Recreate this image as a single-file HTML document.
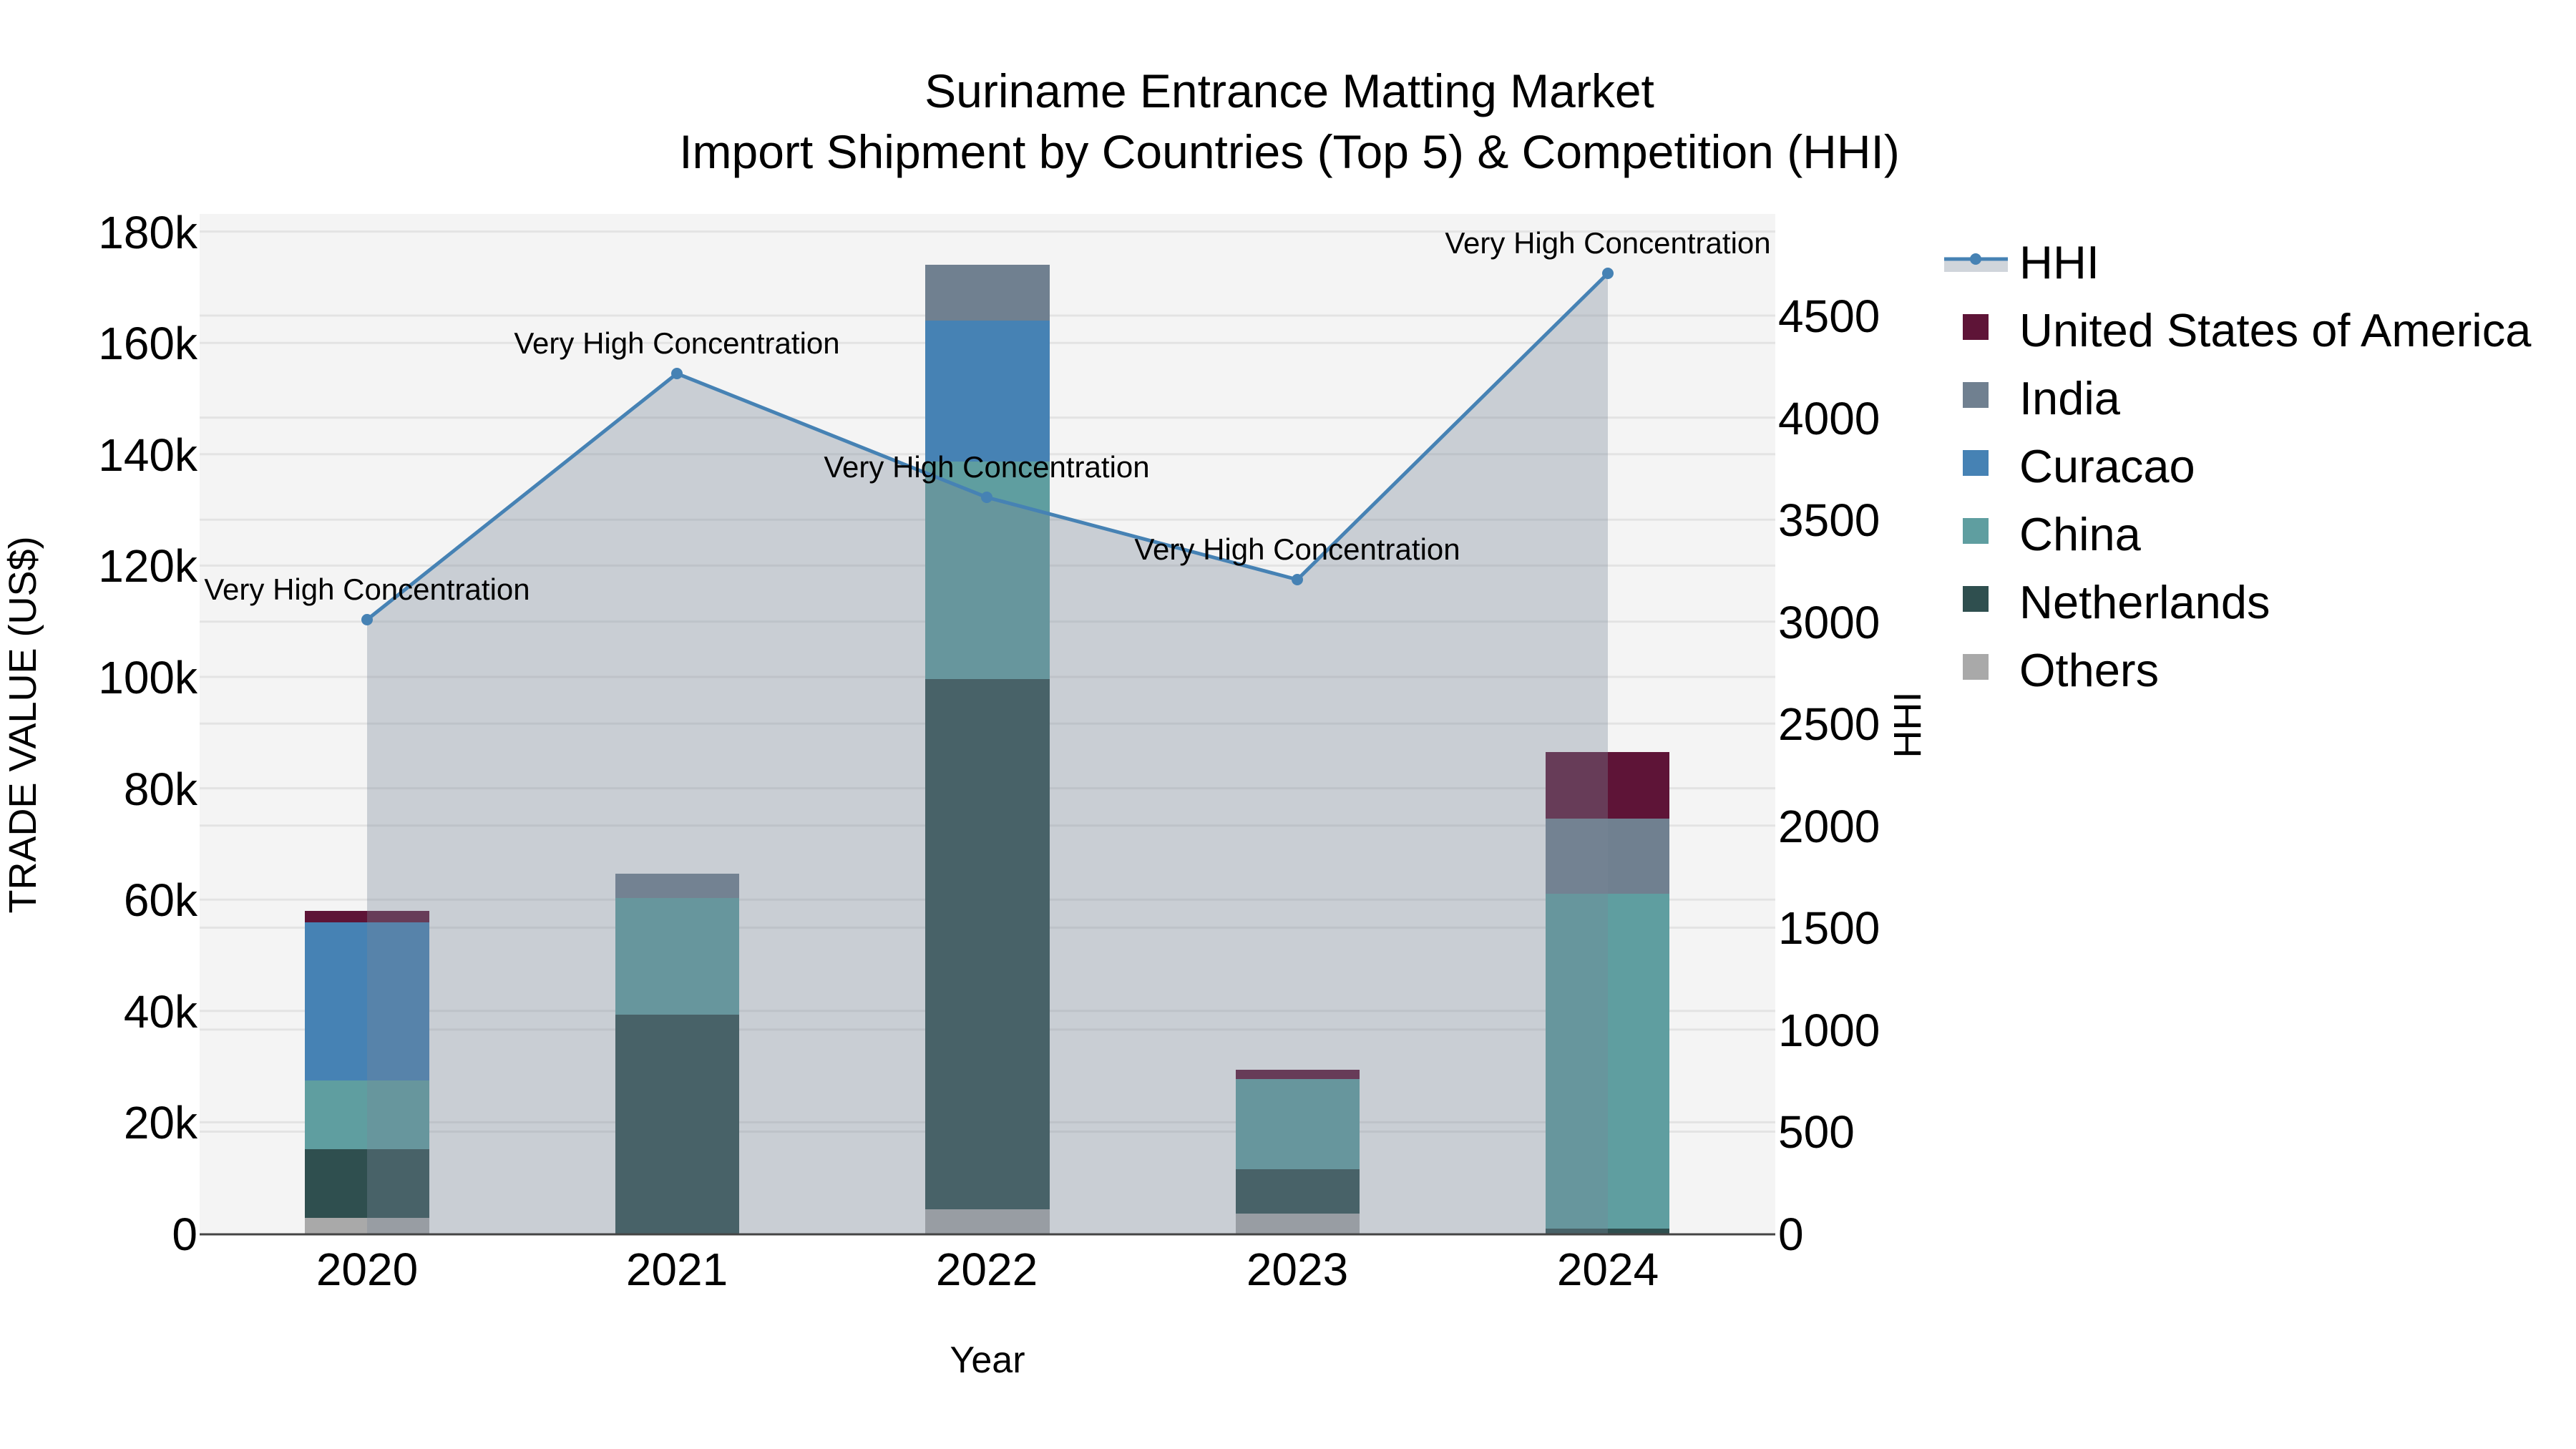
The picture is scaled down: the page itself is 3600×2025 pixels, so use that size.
<!DOCTYPE html>
<html><head><meta charset="utf-8"><style>
html,body{margin:0;padding:0;background:#fff;}
svg{display:block;font-family:"Liberation Sans",sans-serif;}
</style></head><body>
<svg width="3600" height="2025" viewBox="0 0 3600 2025" xmlns="http://www.w3.org/2000/svg">
<rect width="3600" height="2025" fill="#fff"/>
<rect x="279" y="299" width="2202" height="1425" fill="#f4f4f4"/>
<g stroke="#e3e3e3" stroke-width="3">
<line x1="279" x2="2481" y1="1568.4" y2="1568.4"/><line x1="279" x2="2481" y1="1412.8" y2="1412.8"/>
<line x1="279" x2="2481" y1="1257.2" y2="1257.2"/><line x1="279" x2="2481" y1="1101.6" y2="1101.6"/>
<line x1="279" x2="2481" y1="946" y2="946"/><line x1="279" x2="2481" y1="790.4" y2="790.4"/>
<line x1="279" x2="2481" y1="634.8" y2="634.8"/><line x1="279" x2="2481" y1="479.2" y2="479.2"/>
<line x1="279" x2="2481" y1="323.6" y2="323.6"/>
<line x1="279" x2="2481" y1="1581.5" y2="1581.5"/><line x1="279" x2="2481" y1="1438.9" y2="1438.9"/>
<line x1="279" x2="2481" y1="1296.4" y2="1296.4"/><line x1="279" x2="2481" y1="1153.8" y2="1153.8"/>
<line x1="279" x2="2481" y1="1011.3" y2="1011.3"/><line x1="279" x2="2481" y1="868.7" y2="868.7"/>
<line x1="279" x2="2481" y1="726.2" y2="726.2"/><line x1="279" x2="2481" y1="583.6" y2="583.6"/>
<line x1="279" x2="2481" y1="441" y2="441"/>
</g>
<g>
<rect x="426" y="1702" width="174" height="22" fill="#a9a9a9"/>
<rect x="426" y="1606" width="174" height="96" fill="#2f4f4f"/>
<rect x="426" y="1510" width="174" height="96" fill="#5f9ea0"/>
<rect x="426" y="1289" width="174" height="221" fill="#4682b4"/>
<rect x="426" y="1273" width="174" height="16" fill="#5e1437"/>

<rect x="860" y="1418" width="173" height="306" fill="#2f4f4f"/>
<rect x="860" y="1255" width="173" height="163" fill="#5f9ea0"/>
<rect x="860" y="1221" width="173" height="34" fill="#708090"/>

<rect x="1293" y="1690" width="174" height="34" fill="#a9a9a9"/>
<rect x="1293" y="949" width="174" height="741" fill="#2f4f4f"/>
<rect x="1293" y="645" width="174" height="304" fill="#5f9ea0"/>
<rect x="1293" y="448" width="174" height="197" fill="#4682b4"/>
<rect x="1293" y="370" width="174" height="78" fill="#708090"/>

<rect x="1727" y="1696" width="173" height="28" fill="#a9a9a9"/>
<rect x="1727" y="1634" width="173" height="62" fill="#2f4f4f"/>
<rect x="1727" y="1508" width="173" height="126" fill="#5f9ea0"/>
<rect x="1727" y="1495" width="173" height="13" fill="#5e1437"/>

<rect x="2160" y="1717" width="173" height="7" fill="#2f4f4f"/>
<rect x="2160" y="1249" width="173" height="468" fill="#5f9ea0"/>
<rect x="2160" y="1144" width="173" height="105" fill="#708090"/>
<rect x="2160" y="1051" width="173" height="93" fill="#5e1437"/>
</g>
<polygon points="513,1724 513,866 946,522 1379,695 1813,810 2247,382 2247,1724" fill="rgba(119,136,153,0.35)"/>
<polyline points="513,866 946,522 1379,695 1813,810 2247,382" fill="none" stroke="#4682b4" stroke-width="5"/>
<g fill="#4682b4"><circle cx="513" cy="866" r="8"/><circle cx="946" cy="522" r="8"/><circle cx="1379" cy="695" r="8"/><circle cx="1813" cy="810" r="8"/><circle cx="2247" cy="382" r="8"/></g>
<line x1="279" x2="2481" y1="1725" y2="1725" stroke="#444" stroke-width="3"/>
<g font-size="42" text-anchor="middle" fill="#000">
<text x="513" y="838">Very High Concentration</text>
<text x="946" y="494">Very High Concentration</text>
<text x="1379" y="667">Very High Concentration</text>
<text x="1813" y="782">Very High Concentration</text>
<text x="2247" y="354">Very High Concentration</text>
</g>
<g font-size="64" text-anchor="end" fill="#000">
<text x="276" y="1747">0</text><text x="276" y="1591">20k</text><text x="276" y="1436">40k</text>
<text x="276" y="1280">60k</text><text x="276" y="1125">80k</text><text x="276" y="969">100k</text>
<text x="276" y="813">120k</text><text x="276" y="658">140k</text><text x="276" y="502">160k</text>
<text x="276" y="347">180k</text>
</g>
<g font-size="64" fill="#000">
<text x="2485" y="1747">0</text><text x="2485" y="1604">500</text><text x="2485" y="1462">1000</text>
<text x="2485" y="1319">1500</text><text x="2485" y="1177">2000</text><text x="2485" y="1034">2500</text>
<text x="2485" y="892">3000</text><text x="2485" y="749">3500</text><text x="2485" y="607">4000</text>
<text x="2485" y="464">4500</text>
</g>
<g font-size="64" text-anchor="middle" fill="#000">
<text x="513" y="1796">2020</text><text x="946" y="1796">2021</text><text x="1379" y="1796">2022</text>
<text x="1813" y="1796">2023</text><text x="2247" y="1796">2024</text>
</g>
<text x="1380" y="1918" font-size="52" text-anchor="middle">Year</text>
<text transform="translate(50,1013) rotate(-90)" font-size="54" text-anchor="middle">TRADE VALUE (US$)</text>
<text transform="translate(2684,1013) rotate(-90)" font-size="54" text-anchor="middle">HHI</text>
<g font-size="66" text-anchor="middle" fill="#000">
<text x="1802" y="150">Suriname Entrance Matting Market</text>
<text x="1802" y="235">Import Shipment by Countries (Top 5) &amp; Competition (HHI)</text>
</g>
<rect x="2717" y="362" width="89" height="18" fill="rgba(119,136,153,0.35)"/>
<line x1="2717" x2="2806" y1="362" y2="362" stroke="#4682b4" stroke-width="5"/>
<circle cx="2761" cy="362" r="8" fill="#4682b4"/>
<rect x="2743" y="439" width="36" height="36" fill="#5e1437"/>
<rect x="2743" y="534" width="36" height="36" fill="#708090"/>
<rect x="2743" y="629" width="36" height="36" fill="#4682b4"/>
<rect x="2743" y="724" width="36" height="36" fill="#5f9ea0"/>
<rect x="2743" y="819" width="36" height="36" fill="#2f4f4f"/>
<rect x="2743" y="914" width="36" height="36" fill="#a9a9a9"/>
<g font-size="65" fill="#000">
<text x="2822" y="389">HHI</text>
<text x="2822" y="484">United States of America</text>
<text x="2822" y="579">India</text>
<text x="2822" y="674">Curacao</text>
<text x="2822" y="769">China</text>
<text x="2822" y="864">Netherlands</text>
<text x="2822" y="959">Others</text>
</g>
</svg>
</body></html>
